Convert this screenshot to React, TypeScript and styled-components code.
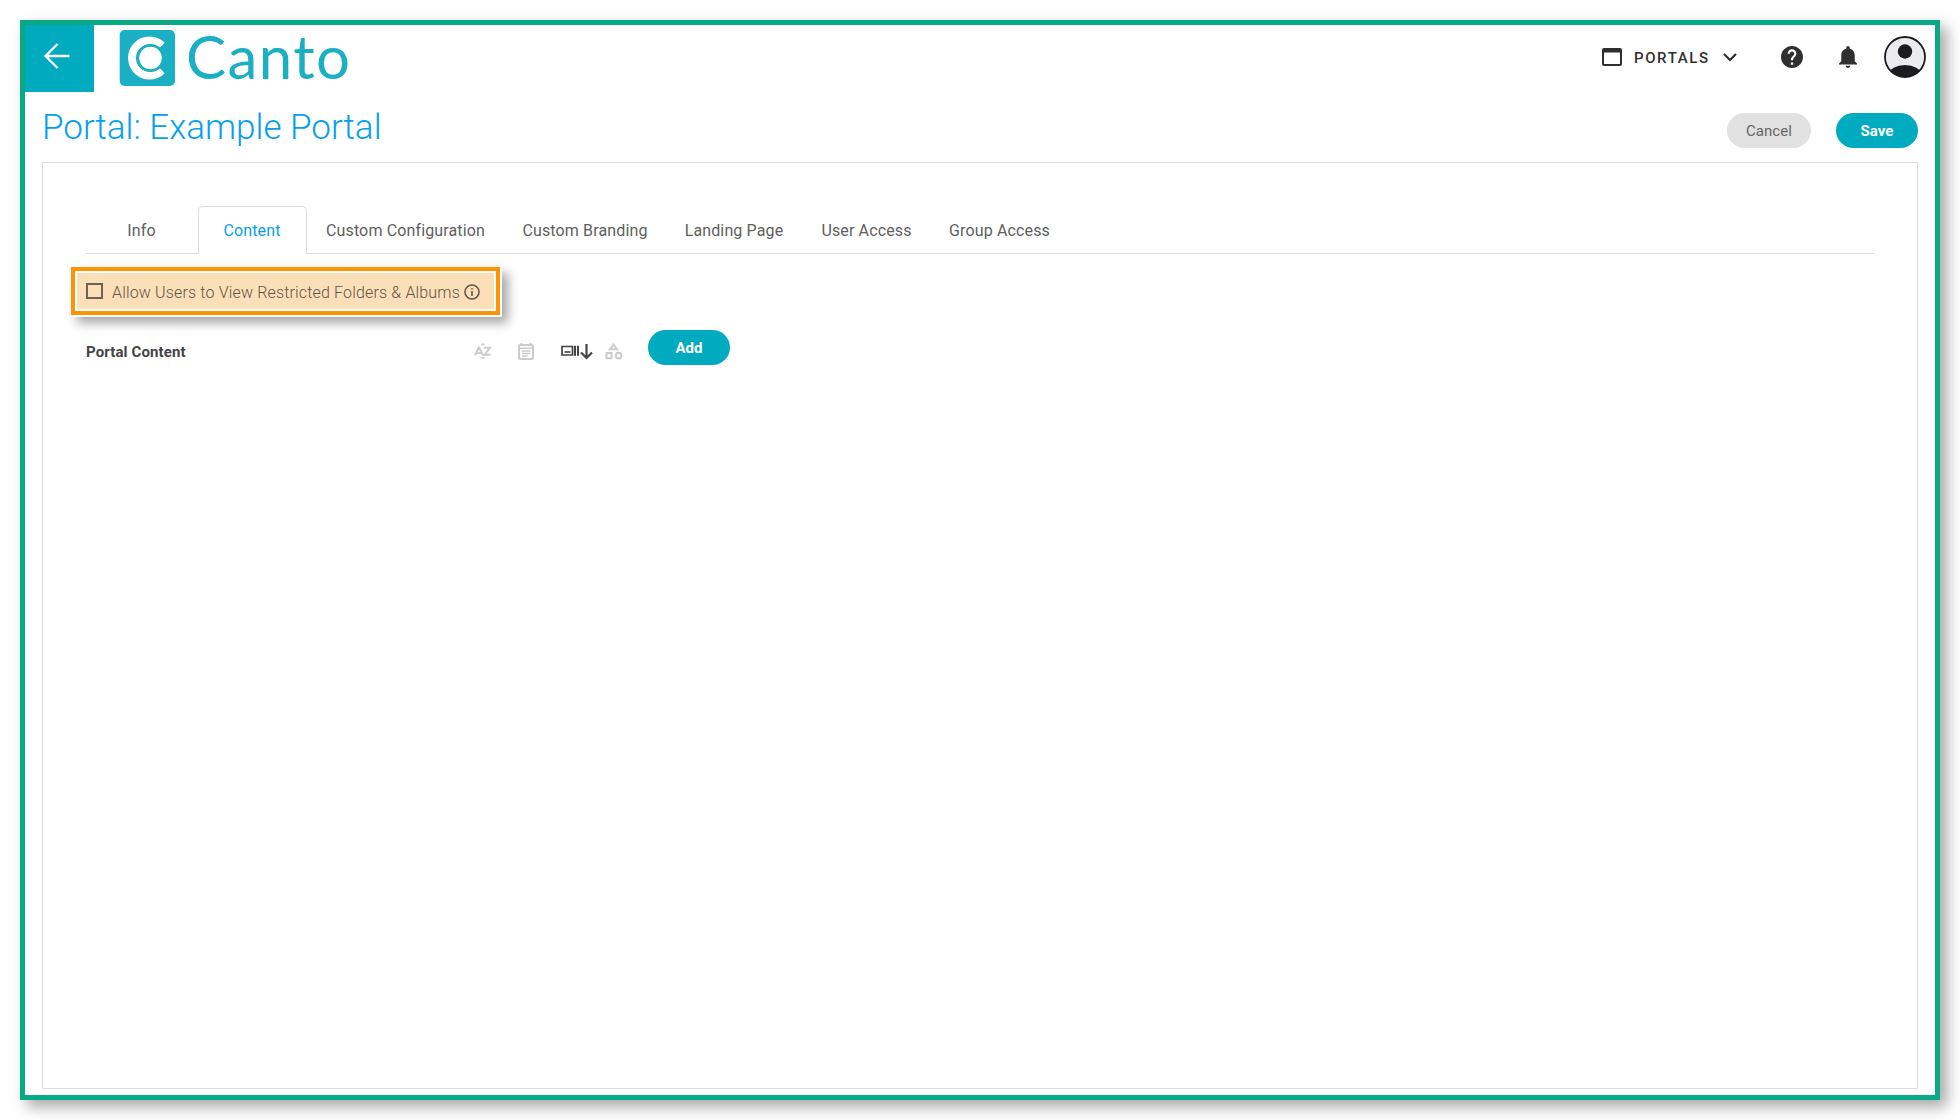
import React from "react";
import styled, { createGlobalStyle } from "styled-components";

const GlobalStyle = createGlobalStyle`
  * { box-sizing: border-box; }
  body { margin: 0; background: #fff; font-family: Roboto, "Liberation Sans", sans-serif; }
`;

const Page = styled.div`
  width: 1960px;
  height: 1120px;
  padding: 20px;
  overflow: hidden;
`;

const Frame = styled.div`
  display: flex;
  flex-direction: column;
  width: 1920px;
  height: 1080px;
  border: 5px solid #09aa82;
  background: #fff;
  box-shadow: 7px 7px 14px rgba(0, 0, 0, 0.35);
`;

const Header = styled.header`
  display: flex;
  height: 67px;
`;

const BackButton = styled.button`
  display: flex;
  width: 69px;
  height: 67px;
  padding: 18px 0 0 18px;
  border: 0;
  background: #00abc0;
`;

const Brand = styled.div`
  display: flex;
  margin-left: 26px;
  padding-top: 5px;
`;

const HeaderTools = styled.div`
  display: flex;
  align-items: center;
  height: 64px;
  margin-left: auto;
  padding-right: 9px;
  color: #2f2f2f;
  svg { display: block; }
`;

const PortalsLabel = styled.span`
  width: 76px;
  margin: 0 13px 0 12px;
  font-size: 15px;
  font-weight: 500;
  letter-spacing: 1.6px;
  line-height: 20px;
  padding-top: 1px;
  white-space: nowrap;
`;

const IconGap = styled.span<{ $w: number }>`
  flex: none;
  width: ${(p) => p.$w}px;
`;

const TitleRow = styled.div`
  display: flex;
  justify-content: space-between;
  height: 70px;
  padding: 0 17px 0 17px;
`;

const Title = styled.h1`
  margin: 13px 0 0;
  font-size: 35px;
  font-weight: 300;
  line-height: 46px;
  color: #069fee;
  white-space: nowrap;
`;

const Actions = styled.div`
  display: flex;
  gap: 25px;
  padding-top: 21px;
`;

const Pill = styled.button<{ $muted?: boolean; $w: number }>`
  width: ${(p) => p.$w}px;
  height: 35px;
  padding: 1px 0 0;
  border: 0;
  border-radius: 18px;
  font-family: inherit;
  font-size: 15px;
  line-height: 34px;
  letter-spacing: 0.05px;
  font-weight: ${(p) => (p.$muted ? 400 : 700)};
  color: ${(p) => (p.$muted ? "#666" : "#fff")};
  background: ${(p) => (p.$muted ? "#e1e1e1" : "#00abc0")};
`;

const Panel = styled.main`
  width: 1876px;
  height: 927px;
  margin-left: 17px;
  padding: 43px 43px 0;
  border: 1px solid #dcdcdc;
`;

const Tabs = styled.nav`
  display: flex;
  height: 48px;
  border-bottom: 1px solid #dcdcdc;
`;

const Tab = styled.div<{ $w: number; $active?: boolean }>`
  flex: none;
  width: ${(p) => p.$w}px;
  height: 48px;
  padding-right: 1px;
  border: 1px solid ${(p) => (p.$active ? "#dcdcdc" : "transparent")};
  border-bottom: 0;
  border-radius: 5px 5px 0 0;
  background: ${(p) => (p.$active ? "#fff" : "none")};
  color: ${(p) => (p.$active ? "#069fee" : "#606060")};
  font-size: 16px;
  letter-spacing: 0.14px;
  line-height: 48px;
  text-align: center;
  white-space: nowrap;
`;

const Highlight = styled.div`
  display: flex;
  width: 429px;
  height: 48px;
  margin: 13px 0 0 -15px;
  padding: 2px;
  border: 4px solid #fc9403;
  background: #fff;
  box-shadow: 2px 2px 0 #fff, 7px 7px 10px 1px rgba(0, 0, 0, 0.35);
`;

const OptionLabel = styled.label`
  display: flex;
  flex: 1;
  padding: 0 0 0 9px;
  background: #fbdfb9;
  color: #615545;
  font-size: 16px;
  letter-spacing: 0.16px;
  line-height: 39px;
  white-space: nowrap;
  svg { flex: none; margin-top: 11px; }
`;

const CheckBox = styled.span`
  flex: none;
  width: 17px;
  height: 16px;
  margin: 10px 9px 0 0;
  border: 2px solid #6e614f;
`;

const OptionText = styled.span`
  width: 352px;
  font-weight: 300;
`;

const ContentRow = styled.div`
  display: flex;
  height: 35px;
  margin-top: 15px;
`;

const ContentHeading = styled.h2`
  width: 388px;
  margin: 4px 0 0;
  font-size: 15px;
  font-weight: 700;
  letter-spacing: 0.12px;
  line-height: 36px;
  color: #444;
`;

const SortIcons = styled.div`
  display: flex;
  width: 174px;
  padding-top: 13px;
  svg { flex: none; display: block; }
`;

const CantoLogo = () => (
  <svg width="250" height="62" viewBox="0 0 250 62" overflow="visible">
    <rect x="-0.300" y="0" width="55.300" height="56" rx="5" fill="#1bafc3" />
    <path d="M41.900 15.600A17.500 17.500 0 1 0 41.900 40.400" fill="none" stroke="#fff" strokeWidth="8" />
    <circle cx="30.500" cy="28" r="12.700" fill="#fff" stroke="#1bafc3" strokeWidth="2.800" />
    <text
      x="66"
      y="49"
      fontFamily="Lato, sans-serif"
      fontSize="60"
      fontWeight="400"
      textLength="164"
      fill="#1bafc3"
    >
      Canto
    </text>
  </svg>
);

const tabs = [
  { name: "Info", w: 112 },
  { name: "Content", w: 109, active: true },
  { name: "Custom Configuration", w: 198 },
  { name: "Custom Branding", w: 161 },
  { name: "Landing Page", w: 137 },
  { name: "User Access", w: 128 },
  { name: "Group Access", w: 138 },
];

export default function App() {
  return (
    <Page>
      <GlobalStyle />
      <Frame>
        <Header>
          <BackButton aria-label="Back">
            <svg width="27" height="26" viewBox="0 0 27 26" fill="none" stroke="#fff" strokeWidth="2.300">
              <path d="M26.500 13H2.500M14.500 1L2.500 13L14.500 25" />
            </svg>
          </BackButton>
          <Brand>
            <CantoLogo />
          </Brand>
          <HeaderTools>
            <svg width="20" height="18" viewBox="0 0 20 18">
              <path
                fill="#2f2f2f"
                fillRule="evenodd"
                d="M2 0h16a2 2 0 0 1 2 2v14a2 2 0 0 1-2 2H2a2 2 0 0 1-2-2V2a2 2 0 0 1 2-2zM2 4.500v11.500h16V4.500z"
              />
            </svg>
            <PortalsLabel>PORTALS</PortalsLabel>
            <svg width="14" height="9" viewBox="0 0 14 9" fill="none" stroke="#2f2f2f" strokeWidth="2.200">
              <path d="M1 1l6 6l6-6" />
            </svg>
            <IconGap $w={44} />
            <svg width="22" height="22" viewBox="2 2 20 20" fill="#2f2f2f">
              <path d="M12 2C6.480 2 2 6.480 2 12s4.480 10 10 10 10-4.480 10-10S17.520 2 12 2zm1 17h-2v-2h2v2zm2.070-7.750l-.9.920C13.450 12.900 13 13.500 13 15h-2v-.5c0-1.100.450-2.100 1.170-2.830l1.240-1.260c.370-.360.590-.860.590-1.410 0-1.100-.9-2-2-2s-2 .9-2 2H8c0-2.210 1.790-4 4-4s4 1.790 4 4c0 .880-.360 1.680-.930 2.250z" />
            </svg>
            <IconGap $w={36} />
            <svg width="18" height="22" viewBox="4 2.500 16 19.500" fill="#2f2f2f">
              <path d="M12 22c1.100 0 2-.9 2-2h-4c0 1.100.890 2 2 2zm6-6v-5c0-3.070-1.640-5.640-4.500-6.320V4c0-.830-.670-1.500-1.500-1.500s-1.500.670-1.500 1.500v.680C7.630 5.360 6 7.920 6 11v5l-2 2v1h16v-1l-2-2z" />
            </svg>
            <IconGap $w={27} />
            <svg width="42" height="42" viewBox="0 0 42 42">
              <clipPath id="avatar">
                <circle cx="21" cy="21" r="20" />
              </clipPath>
              <circle cx="21" cy="21" r="20" fill="#ebebf0" />
              <ellipse cx="21" cy="38" rx="16" ry="9" fill="#1c1b20" clipPath="url(#avatar)" />
              <circle cx="21" cy="15.500" r="7.200" fill="#1c1b20" />
              <circle cx="21" cy="21" r="20" fill="none" stroke="#1c1b20" strokeWidth="1.800" />
            </svg>
          </HeaderTools>
        </Header>
        <TitleRow>
          <Title>Portal: Example Portal</Title>
          <Actions>
            <Pill $muted $w={84}>Cancel</Pill>
            <Pill $w={82}>Save</Pill>
          </Actions>
        </TitleRow>
        <Panel>
          <Tabs>
            {tabs.map((t) => (
              <Tab key={t.name} $w={t.w} $active={t.active}>
                {t.name}
              </Tab>
            ))}
          </Tabs>
          <Highlight>
            <OptionLabel>
              <CheckBox />
              <OptionText>Allow Users to View Restricted Folders &amp; Albums</OptionText>
              <svg width="16" height="16" viewBox="0 0 16 16">
                <circle cx="8" cy="8" r="7" fill="none" stroke="#655949" strokeWidth="1.600" />
                <path d="M7.200 4h1.600v1.600H7.200zM7.200 7h1.600v5H7.200z" fill="#655949" />
              </svg>
            </OptionLabel>
          </Highlight>
          <ContentRow>
            <ContentHeading>Portal Content</ContentHeading>
            <SortIcons>
              <svg width="18" height="18" viewBox="0 0 18 18">
                <path d="M6.500 2.300L9 0l2.500 2.300zM6.500 14L9 16.300l2.500-2.300z" fill="#ccc" />
                <path
                  d="M1 12.300L4.700 4.500h.6L9 12.300M2.600 10h4.800M10.200 4.800h5.800L10.500 11.800h6"
                  fill="none"
                  stroke="#ccc"
                  strokeWidth="1.900"
                />
              </svg>
              <IconGap $w={26} />
              <svg width="16" height="17" viewBox="0 0 16 17">
                <path
                  fill="#ccc"
                  fillRule="evenodd"
                  d="M2.500 0h2v1h7V0h2v1h1L16 2.500V15.500L14.500 17h-13L0 15.500v-13L1.500 1h1zM2 3v1.500h12V3zM2 6v9h12V6z"
                />
                <path d="M4 8h8.500M4 10.500h8.500M4 13h5.500" stroke="#ccc" strokeWidth="1.400" />
              </svg>
              <IconGap $w={27} />
              <svg width="32" height="17" viewBox="0 0 32 17" fill="none" stroke="#444">
                <path d="M1 3.500h10.500v8.500H1z" strokeWidth="1.700" />
                <path d="M3.500 9h6" strokeWidth="1.600" />
                <path d="M14 2.700v10M17 2.700v10" strokeWidth="2" />
                <path d="M25.500 1v14M20 9.500l5.500 5.500l5.500-5.500" strokeWidth="2.200" />
              </svg>
              <IconGap $w={12} />
              <svg width="18" height="17" viewBox="0 0 18 17" fill="none" stroke="#ccc" strokeWidth="2">
                <path d="M8.500 1.500L12 6.300H5zM1.500 10h5v5.200H1.500z" />
                <circle cx="13.700" cy="12.600" r="2.900" />
              </svg>
            </SortIcons>
            <Pill $w={82}>Add</Pill>
          </ContentRow>
        </Panel>
      </Frame>
    </Page>
  );
}
